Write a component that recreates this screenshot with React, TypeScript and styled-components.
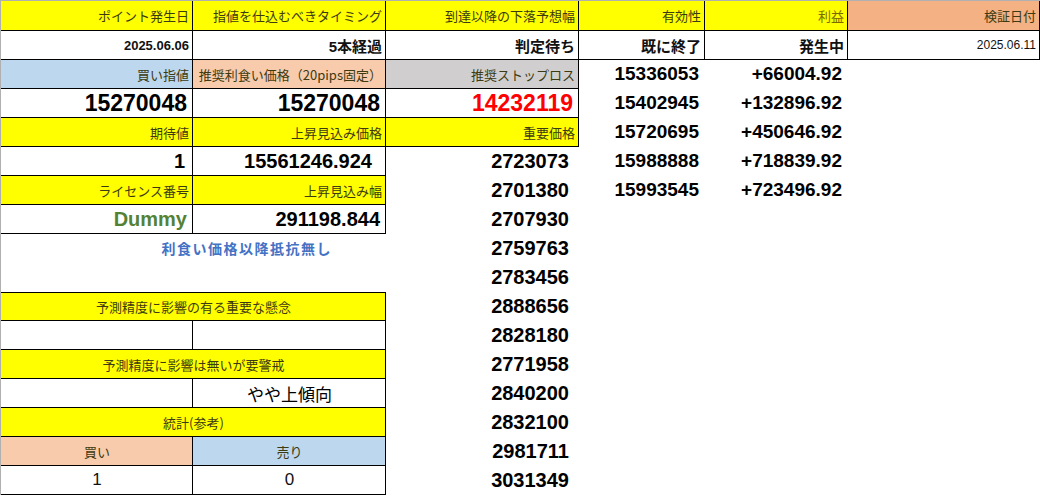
import React from "react";
import styled, { createGlobalStyle } from "styled-components";

const Global = createGlobalStyle`
  body { margin: 0; background: #fff; font-family: "Liberation Sans", "Noto Sans CJK JP", sans-serif; }
`;

const Sheet = styled.div`
  display: grid;
  grid-template-columns: 192px 193px 193px 126px 143px 192px;
  grid-template-rows: 30px repeat(16, 29px);
  border-top: 1px solid #b0b0b0;
  border-left: 1px solid #b0b0b0;
  width: 1039px;
`;

type CellProps = {
  $bg?: string;
  $b?: boolean;
  $top?: boolean;
  $span?: number;
  $align?: "left" | "center" | "right";
  $size?: number;
  $bold?: boolean;
  $color?: string;
  $pr?: number;
  $ls?: number;
};

const Cell = styled.div<CellProps>`
  grid-column: span ${(p) => p.$span ?? 1};
  background: ${(p) => p.$bg ?? "transparent"};
  box-shadow: ${(p) =>
    p.$b ? `inset -1px -1px 0 #000${p.$top ? ", inset 0 1px 0 #000" : ""}` : "none"};
  display: flex;
  align-items: center;
  justify-content: ${(p) =>
    p.$align === "center" ? "center" : p.$align === "left" ? "flex-start" : "flex-end"};
  padding-right: ${(p) => (p.$align === "center" ? 0 : p.$pr ?? 4)}px;
  padding-bottom: 1px;
  font-size: ${(p) => p.$size ?? 13}px;
  font-weight: ${(p) => (p.$bold ? 700 : 400)};
  color: ${(p) => p.$color ?? "#111"};
  letter-spacing: ${(p) => p.$ls ?? 0}px;
  white-space: nowrap;
  overflow: visible;
`;

const Y = "#ffff00";
const HC = "#3c3a10";

const Head = (p: { children?: React.ReactNode; bg?: string; color?: string; span?: number; top?: boolean; align?: "center" | "right" }) => (
  <Cell $bg={p.bg ?? Y} $b $top={p.top} $span={p.span} $align={p.align} $color={p.color ?? HC} $size={13}
    style={{ fontFamily: '"Noto Sans CJK JP", sans-serif' }}>
    {p.children}
  </Cell>
);

const Num = (p: { children?: React.ReactNode; pr?: number; size?: number; color?: string; b?: boolean }) => (
  <Cell $b={p.b} $bold $size={p.size ?? 19} $pr={p.pr ?? 8} $color={p.color ?? "#000"}>{p.children}</Cell>
);

const Empty = styled.div<{ $b?: boolean }>`
  box-shadow: ${(p) => (p.$b ? "inset -1px -1px 0 #000" : "none")};
`;

const side: [string, string][] = [
  ["15336053", "+66004.92"],
  ["15402945", "+132896.92"],
  ["15720695", "+450646.92"],
  ["15988888", "+718839.92"],
  ["15993545", "+723496.92"],
];

const Side = ({ i }: { i: number }) =>
  side[i] ? (
    <>
      <Num pr={6}>{side[i][0]}</Num>
      <Num pr={6}>{side[i][1]}</Num>
      <Empty />
    </>
  ) : (
    <>
      <Empty />
      <Empty />
      <Empty />
    </>
  );

export default function App() {
  return (
    <>
      <Global />
      <Sheet>
        <Head>ポイント発生日</Head>
        <Head>指値を仕込むべきタイミング</Head>
        <Head>到達以降の下落予想幅</Head>
        <Head>有効性</Head>
        <Head color="#7a6a00">利益</Head>
        <Head bg="#f4b183">検証日付</Head>

        <Cell $b $bold $size={13}>2025.06.06</Cell>
        <Cell $b $bold $size={15}>5本経過</Cell>
        <Cell $b $bold $size={15}>判定待ち</Cell>
        <Cell $b $bold $size={15}>既に終了</Cell>
        <Cell $b $bold $size={15}>発生中</Cell>
        <Cell $b $size={12}>2025.06.11</Cell>

        <Head bg="#bdd7ee">買い指値</Head>
        <Head bg="#f8cbad">推奨利食い価格（20pips固定）</Head>
        <Head bg="#d0cece">推奨ストップロス</Head>
        <Side i={0} />

        <Num b size={23} pr={6}>15270048</Num>
        <Num b size={23} pr={6}>15270048</Num>
        <Num b size={23} pr={6} color="#ff0000">14232119</Num>
        <Side i={1} />

        <Head>期待値</Head>
        <Head>上昇見込み価格</Head>
        <Head>重要価格</Head>
        <Side i={2} />

        <Num b size={20} pr={8}>1</Num>
        <Num b size={20} pr={14}>15561246.924</Num>
        <Num pr={10} size={20}>2723073</Num>
        <Side i={3} />

        <Head>ライセンス番号</Head>
        <Head>上昇見込み幅</Head>
        <Num pr={10} size={20}>2701380</Num>
        <Side i={4} />

        <Num b size={20} pr={6} color="#548235">Dummy</Num>
        <Num b size={20} pr={6}>291198.844</Num>
        <Num pr={10} size={20}>2707930</Num>
        <Side i={9} />

        <Cell $span={2} $bold $size={14} $color="#4472c4" $pr={54} $ls={1.5}
          style={{ fontFamily: '"Noto Sans CJK JP", sans-serif' }}>利食い価格以降抵抗無し</Cell>
        <Num pr={10} size={20}>2759763</Num>
        <Side i={9} />

        <Empty />
        <Empty />
        <Num pr={10} size={20}>2783456</Num>
        <Side i={9} />

        <Head span={2} top align="center">予測精度に影響の有る重要な懸念</Head>
        <Num pr={10} size={20}>2888656</Num>
        <Side i={9} />

        <Empty $b />
        <Empty $b />
        <Num pr={10} size={20}>2828180</Num>
        <Side i={9} />

        <Head span={2} align="center">予測精度に影響は無いが要警戒</Head>
        <Num pr={10} size={20}>2771958</Num>
        <Side i={9} />

        <Empty $b />
        <Cell $b $align="center" $size={17} $color="#000" style={{ fontFamily: '"Noto Sans CJK JP", sans-serif' }}>やや上傾向</Cell>
        <Num pr={10} size={20}>2840200</Num>
        <Side i={9} />

        <Head span={2} align="center">統計(参考)</Head>
        <Num pr={10} size={20}>2832100</Num>
        <Side i={9} />

        <Head bg="#f8cbad" align="center">買い</Head>
        <Head bg="#bdd7ee" align="center">売り</Head>
        <Num pr={10} size={20}>2981711</Num>
        <Side i={9} />

        <Cell $b $align="center" $size={17}>1</Cell>
        <Cell $b $align="center" $size={17}>0</Cell>
        <Num pr={10} size={20}>3031349</Num>
        <Side i={9} />
      </Sheet>
    </>
  );
}
